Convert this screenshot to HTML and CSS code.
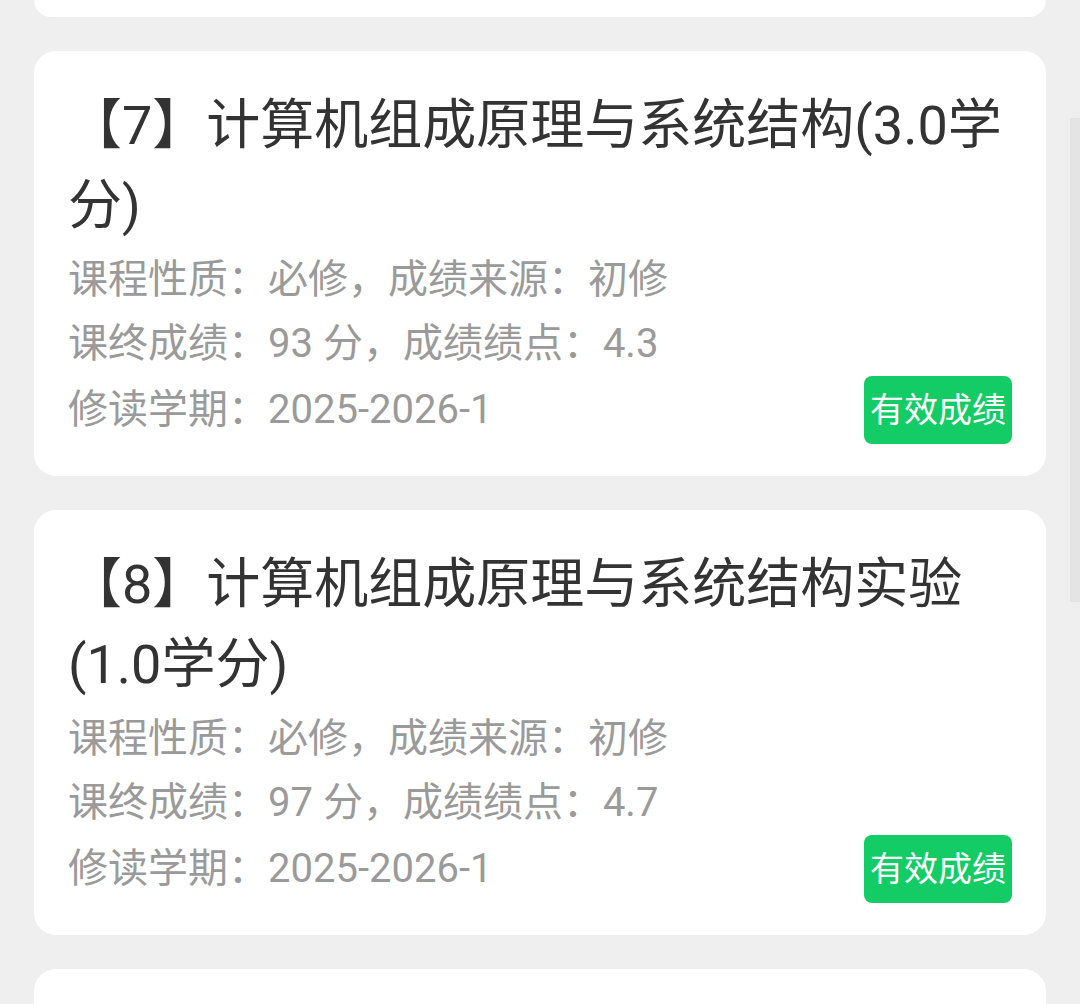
FILE: index.html
```html
<!DOCTYPE html>
<html lang="zh-CN">

<head>
    <meta charset="UTF-8">
    <meta name="viewport" content="width=device-width, initial-scale=1.0">
    <title>成绩查询</title>
    <link rel="stylesheet" href="styles.css">
</head>

<body>

    <div class="page">
        <div class="list">
            <!-- 上一张卡片，已滚出屏幕 -->
            <div class="card card-cut"></div>

            <div class="card">
                <div class="course-name">【7】计算机组成原理与系统结构(3.0学分)</div>
                <div class="info">课程性质：必修，成绩来源：初修</div>
                <div class="info">课终成绩：93 分，成绩绩点：4.3</div>
                <div class="info-row">
                    <span class="info">修读学期：2025-2026-1</span>
                    <span class="tag">有效成绩</span>
                </div>
            </div>

            <div class="card">
                <div class="course-name">【8】计算机组成原理与系统结构实验(1.0学分)</div>
                <div class="info">课程性质：必修，成绩来源：初修</div>
                <div class="info">课终成绩：97 分，成绩绩点：4.7</div>
                <div class="info-row">
                    <span class="info">修读学期：2025-2026-1</span>
                    <span class="tag">有效成绩</span>
                </div>
            </div>

            <div class="card card-next"></div>
        </div>
        <div class="scrollbar"></div>
    </div>

</body>

</html>
```

FILE: styles.css
```css
* {
    box-sizing: border-box;
}

html,
body {
    margin: 0;
    height: 100%;
    overflow: hidden;
}

body {
    background-color: #efefef;
    font-family: Roboto, "Noto Sans CJK SC", "Noto Sans", sans-serif;
}

.page {
    position: relative;
    height: 100%;
}

.list {
    display: flex;
    flex-direction: column;
    gap: 34px;
    padding: 0 34px;
}

.card {
    background-color: #fff;
    border-radius: 22px;
    padding: 35px 34px 32px;
}

/* 只露出底部的上一张卡片 */
.card-cut {
    height: 17px;
    padding: 0;
    border-radius: 0 0 22px 22px;
}

.card-next {
    height: 120px;
}

.course-name {
    font-size: 54px;
    line-height: 80px;
    color: #333;
    margin-bottom: 2px;
}

.info {
    font-size: 40px;
    line-height: 64px;
    color: #9a9a9a;
}

.info-row {
    display: flex;
    align-items: center;
    justify-content: space-between;
    height: 68px;
}

.tag {
    height: 68px;
    line-height: 68px;
    padding: 0 6px;
    font-size: 34px;
    color: #fff;
    background-color: #13cc66;
    border-radius: 8px;
}

.scrollbar {
    position: absolute;
    top: 118px;
    right: 0;
    width: 10px;
    height: 484px;
    background-color: #e4e4e4;
}
```
